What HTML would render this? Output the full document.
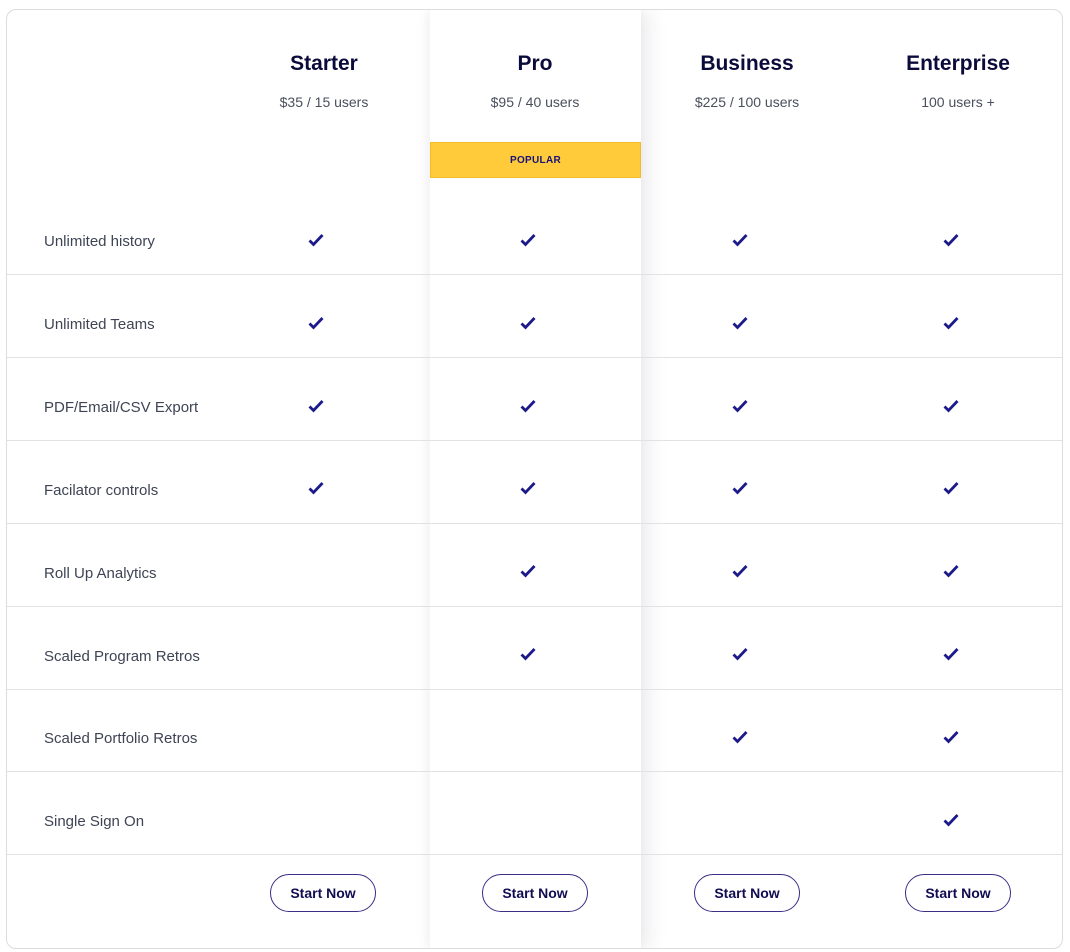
<!DOCTYPE html>
<html><head><style>
*{margin:0;padding:0;box-sizing:border-box}
body{width:1070px;height:952px;background:#fff;font-family:"Liberation Sans",Arial,sans-serif;position:relative;overflow:hidden}
.card{position:absolute;left:6px;top:9px;width:1057px;height:940px;border:1px solid #dcdce0;border-radius:10px;overflow:hidden;background:#fff}
.pro{position:absolute;left:423px;top:0;width:211px;height:940px;background:#fff;box-shadow:6px 0 20px rgba(40,40,70,.10),-2px 0 10px rgba(40,40,70,.04);z-index:1}
.line{position:absolute;left:0;width:1057px;height:1px;background:#e2e2e6;z-index:2}
.t{position:absolute;text-align:center;width:212px;z-index:3}
.h{font-weight:bold;font-size:21px;color:#0b0b3b;top:42px}
.p{font-size:14px;color:#4a4f5c;top:84px}
.pop{position:absolute;left:423px;top:132px;width:211px;height:36px;background:#ffcb3b;border:1px solid #f2bb2a;z-index:3;text-align:center;font-size:10px;font-weight:bold;color:#17137a;line-height:35px;letter-spacing:.3px}
.lab{position:absolute;left:37px;font-size:15px;color:#3e4454;z-index:3}
.ck{position:absolute;z-index:3;width:16px;height:14px}
.btn{position:absolute;z-index:3;width:106px;height:38px;border:1.3px solid #3a2f86;border-radius:19px;font-size:14px;font-weight:bold;color:#110c52;text-align:center;line-height:36px;background:#fff}
</style></head><body>
<div class="card">
<div class="pro"></div>
<div class="t h" style="left:211px">Starter</div>
<div class="t h" style="left:422px">Pro</div>
<div class="t h" style="left:634px">Business</div>
<div class="t h" style="left:845px">Enterprise</div>
<div class="t p" style="left:211px">$35 / 15 users</div>
<div class="t p" style="left:422px">$95 / 40 users</div>
<div class="t p" style="left:634px">$225 / 100 users</div>
<div class="t p" style="left:845px">100 users +</div>
<div class="pop">POPULAR</div>
<div class="line" style="top:264px"></div>
<div class="line" style="top:347px"></div>
<div class="line" style="top:430px"></div>
<div class="line" style="top:513px"></div>
<div class="line" style="top:596px"></div>
<div class="line" style="top:679px"></div>
<div class="line" style="top:761px"></div>
<div class="line" style="top:844px"></div>
<div class="lab" style="top:223px">Unlimited history</div>
<div class="lab" style="top:306px">Unlimited Teams</div>
<div class="lab" style="top:389px">PDF/Email/CSV Export</div>
<div class="lab" style="top:472px">Facilator controls</div>
<div class="lab" style="top:555px">Roll Up Analytics</div>
<div class="lab" style="top:638px">Scaled Program Retros</div>
<div class="lab" style="top:720px">Scaled Portfolio Retros</div>
<div class="lab" style="top:803px">Single Sign On</div>
<div id="cks"></div>
<div class="btn" style="left:263px;top:864px">Start Now</div>
<div class="btn" style="left:475px;top:864px">Start Now</div>
<div class="btn" style="left:687px;top:864px">Start Now</div>
<div class="btn" style="left:898px;top:864px">Start Now</div>
</div>
<script>
var rows=[[1,1,1,1],[1,1,1,1],[1,1,1,1],[1,1,1,1],[0,1,1,1],[0,1,1,1],[0,0,1,1],[0,0,0,1]];
var xs=[301,513,725,936],h='';
rows.forEach(function(r,i){r.forEach(function(v,j){if(v)h+='<svg class="ck" style="left:'+xs[j]+'px;top:'+(223+i*82.8)+'px" viewBox="0 0 16 14"><path d="M1.5 7.5 L5.5 11.5 L14.5 2" fill="none" stroke="#1c1a8a" stroke-width="2.8"/></svg>';});});
document.getElementById('cks').innerHTML=h;
</script>
</body></html>
